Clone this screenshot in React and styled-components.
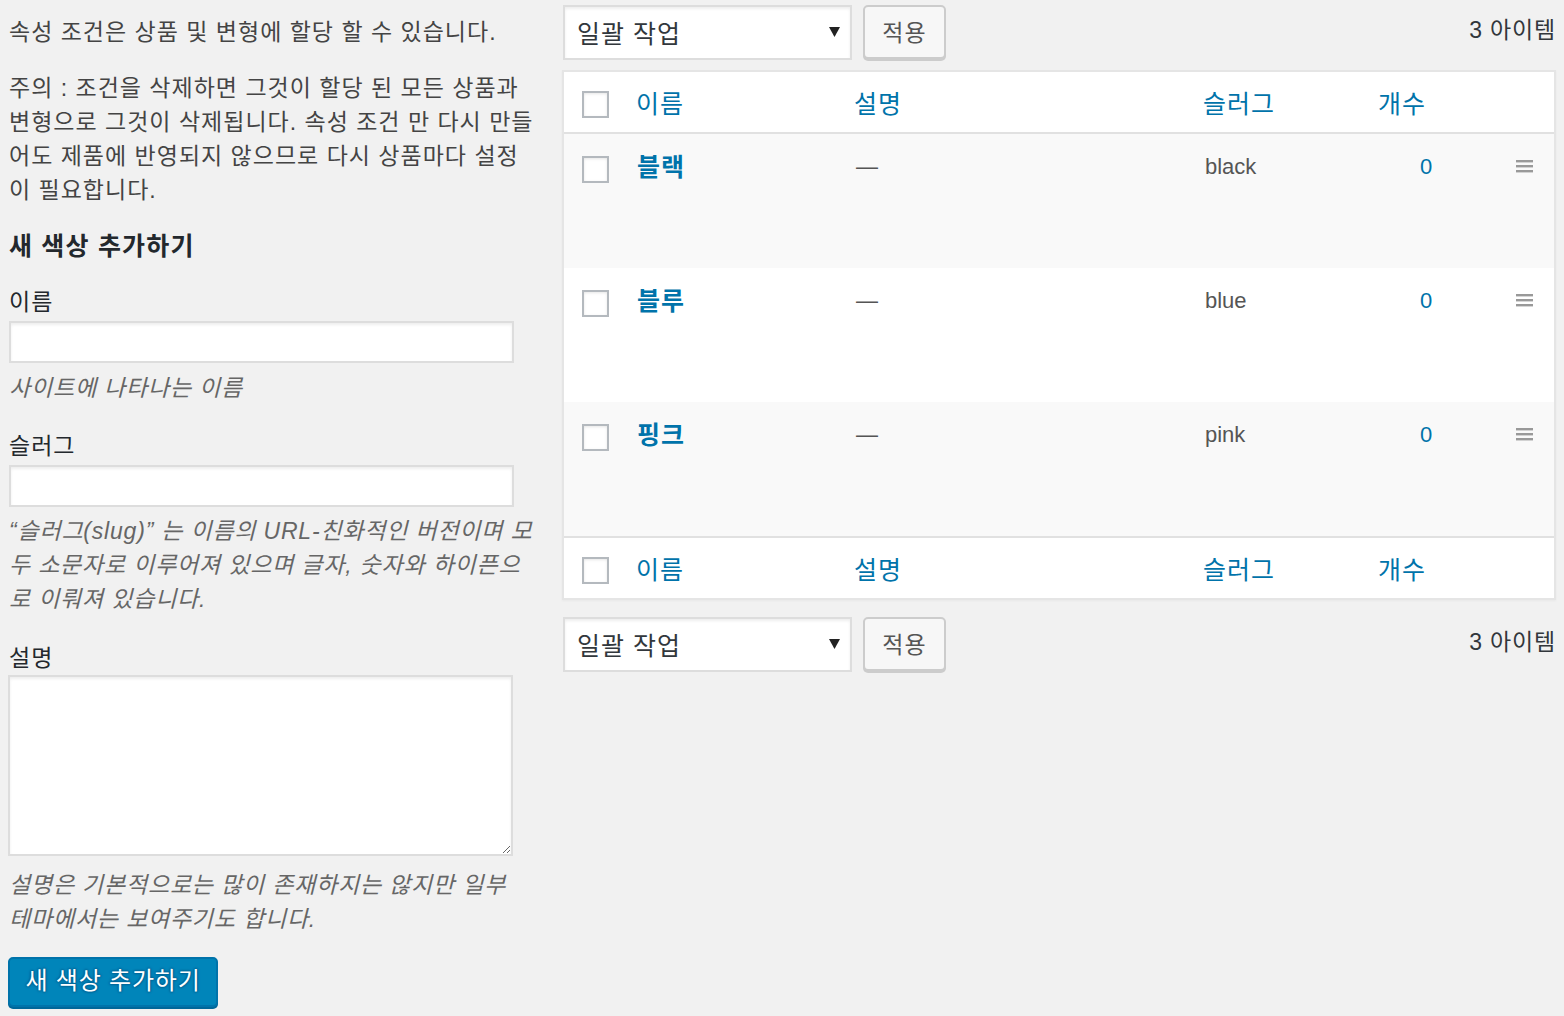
import styled, { createGlobalStyle } from "styled-components";

const GlobalStyle = createGlobalStyle`
  html, body {
    margin: 0;
    background: #f1f1f1;
  }
  body {
    font-family: "Liberation Sans", "Noto Sans CJK KR", sans-serif;
    color: #444;
    font-size: 23px;
    letter-spacing: 1px;
  }
  * {
    box-sizing: border-box;
  }
`;

const terms = [
  { name: "블랙", slug: "black", count: 0 },
  { name: "블루", slug: "blue", count: 0 },
  { name: "핑크", slug: "pink", count: 0 },
];

const Lines = ({ lines }) =>
  lines.map((l, i) => (
    <span key={i}>
      {l}
      {i < lines.length - 1 && <br />}
    </span>
  ));

const BulkActions = ({ bottom }) => (
  <TableNav $bottom={bottom}>
    <BulkSelect>
      <span>일괄 작업</span>
      <svg width="11" height="10" viewBox="0 0 11 10">
        <path d="M0 0 H11 L5.5 10 Z" fill="#222" />
      </svg>
    </BulkSelect>
    <ApplyButton>적용</ApplyButton>
    <ItemCount>3 아이템</ItemCount>
  </TableNav>
);

const HeaderRow = ({ foot }) => (
  <HeadRow $foot={foot}>
    <CheckCell $head>
      <Check type="checkbox" />
    </CheckCell>
    <HeadCell>이름</HeadCell>
    <HeadCell>설명</HeadCell>
    <HeadCell>슬러그</HeadCell>
    <HeadCell>개수</HeadCell>
    <div />
  </HeadRow>
);

const App = () => {
  return (
    <>
      <GlobalStyle />
      <Wrap>
        <LeftCol>
          <Para $top={15}>속성 조건은 상품 및 변형에 할당 할 수 있습니다.</Para>
          <Para $top={22}>
            <Lines
              lines={[
                "주의 : 조건을 삭제하면 그것이 할당 된 모든 상품과",
                "변형으로 그것이 삭제됩니다. 속성 조건 만 다시 만들",
                "어도 제품에 반영되지 않으므로 다시 상품마다 설정",
                "이 필요합니다.",
              ]}
            />
          </Para>
          <Heading>새 색상 추가하기</Heading>

          <Label $top={22}>이름</Label>
          <TextInput type="text" />
          <Help $top={8}>사이트에 나타나는 이름</Help>

          <Label $top={24}>슬러그</Label>
          <TextInput type="text" />
          <Help $top={7}>
            <Lines
              lines={[
                "“슬러그(slug)” 는 이름의 URL-친화적인 버전이며 모",
                "두 소문자로 이루어져 있으며 글자, 숫자와 하이픈으",
                "로 이뤄져 있습니다.",
              ]}
            />
          </Help>

          <Label $top={25}>설명</Label>
          <TextArea />
          <Help $top={12}>
            <Lines
              lines={[
                "설명은 기본적으로는 많이 존재하지는 않지만 일부",
                "테마에서는 보여주기도 합니다.",
              ]}
            />
          </Help>

          <PrimaryButton>새 색상 추가하기</PrimaryButton>
        </LeftCol>

        <RightCol>
          <BulkActions />

          <Table>
            <HeaderRow />
            {terms.map((t, i) => (
              <Row key={t.slug} $alt={i % 2 === 0}>
                <CheckCell>
                  <Check type="checkbox" />
                </CheckCell>
                <NameCell>{t.name}</NameCell>
                <Cell>—</Cell>
                <Cell>{t.slug}</Cell>
                <CountCell>{t.count}</CountCell>
                <HandleCell>
                  <svg width="17" height="13" viewBox="0 0 17 13">
                    <rect x="0" y="0" width="17" height="2.4" fill="#999" />
                    <rect x="0" y="5" width="17" height="2.4" fill="#999" />
                    <rect x="0" y="10" width="17" height="2.4" fill="#999" />
                  </svg>
                </HandleCell>
              </Row>
            ))}
            <HeaderRow foot />
          </Table>

          <BulkActions bottom />
        </RightCol>
      </Wrap>
    </>
  );
};

export default App;

const Wrap = styled.div`
  display: flex;
  align-items: flex-start;
  gap: 22px;
  padding: 0 8px 0 8px;
  min-height: 1016px;
`;

const LeftCol = styled.div`
  width: 532px;
  flex: none;
  display: flex;
  flex-direction: column;
  padding-left: 1px;
`;

const Para = styled.p`
  margin: ${(p) => p.$top}px 0 0;
  font-size: 23px;
  line-height: 34px;
  color: #444;
  white-space: nowrap;
`;

const Heading = styled.h2`
  margin: 22px 0 0;
  font-size: 25px;
  line-height: 34px;
  letter-spacing: 1.2px;
  font-weight: 700;
  color: #23282d;
`;

const Label = styled.label`
  margin-top: ${(p) => p.$top}px;
  font-size: 23px;
  line-height: 34px;
  color: #23282d;
`;

const TextInput = styled.input`
  margin-top: 2px;
  width: 505px;
  height: 42px;
  background: #fff;
  border: 2px solid #ddd;
  box-shadow: inset 0 2px 3px rgba(0, 0, 0, 0.07);
  font: inherit;
  outline: none;
`;

const Help = styled.p`
  margin: ${(p) => p.$top}px 0 0;
  font-size: 23px;
  line-height: 34px;
  letter-spacing: 0.8px;
  font-style: italic;
  color: #666;
  white-space: nowrap;
`;

const TextArea = styled.textarea`
  margin: 0 0 0 -1px;
  width: 505px;
  height: 181px;
  background: #fff;
  border: 2px solid #ddd;
  box-shadow: inset 0 2px 3px rgba(0, 0, 0, 0.07);
  resize: vertical;
  font: inherit;
  outline: none;
`;

const PrimaryButton = styled.button`
  margin: 21px 0 0 -1px;
  align-self: flex-start;
  width: 210px;
  height: 50px;
  padding: 0 0 3px;
  background: #0085ba;
  border: 2px solid #0073aa;
  border-radius: 5px;
  box-shadow: 0 2px 0 #006799;
  color: #fff;
  font-family: inherit;
  font-size: 24px;
  letter-spacing: 0.8px;
  line-height: 1;
  text-shadow: 0 -1px 2px #006799, 1px 0 2px #006799, 0 1px 2px #006799,
    -1px 0 2px #006799;
`;

const RightCol = styled.div`
  flex: 1;
  display: flex;
  flex-direction: column;
  padding-top: 5px;
`;

const TableNav = styled.div`
  display: flex;
  align-items: flex-start;
  height: 57px;
  margin: ${(p) => (p.$bottom ? "17px 0 0" : "0 0 8px")};
`;

const BulkSelect = styled.div`
  display: flex;
  align-items: center;
  justify-content: space-between;
  width: 289px;
  height: 55px;
  margin-left: 1px;
  padding: 0 10px 0 12px;
  background: #fff;
  border: 2px solid #ddd;
  box-shadow: inset 0 2px 3px rgba(0, 0, 0, 0.07);
  font-size: 25px;
  color: #32373c;

  span {
    line-height: 1;
    margin-top: 4px;
  }
  svg {
    display: block;
    margin-top: -2px;
  }
`;

const ApplyButton = styled.button`
  margin-left: 11px;
  width: 83px;
  height: 54px;
  padding: 2px 0 0;
  background: #f7f7f7;
  border: 2px solid #ccc;
  border-radius: 5px;
  box-shadow: 0 2px 0 #ccc;
  color: #555;
  font-family: inherit;
  font-size: 23px;
  letter-spacing: 1px;
  line-height: 1;
`;

const ItemCount = styled.div`
  margin-left: auto;
  font-size: 23px;
  line-height: 50px;
  letter-spacing: 0.8px;
  color: #32373c;
`;

const Table = styled.div`
  background: #fff;
  border: 2px solid #e5e5e5;
  box-shadow: 0 1px 2px rgba(0, 0, 0, 0.04);
`;

const gridCols = "56px 218px 349px 175px 128px 1fr";

const HeadRow = styled.div`
  display: grid;
  grid-template-columns: ${gridCols};
  height: 62px;
  background: #fff;
  ${(p) =>
    p.$foot
      ? "border-top: 2px solid #e1e1e1;"
      : "border-bottom: 2px solid #e1e1e1;"}
`;

const Row = styled.div`
  display: grid;
  grid-template-columns: ${gridCols};
  height: 134px;
  background: ${(p) => (p.$alt ? "#f9f9f9" : "#fff")};
`;

const CheckCell = styled.div`
  padding: ${(p) => (p.$head ? "19px 0 0 18px" : "22px 0 0 18px")};
`;

const Check = styled.input`
  appearance: none;
  display: block;
  margin: 0;
  width: 27px;
  height: 27px;
  background: #fff;
  border: 2px solid #b4b9be;
  box-shadow: inset 0 1px 3px rgba(0, 0, 0, 0.1);
`;

const HeadCell = styled.div`
  padding: 15px 0 0 16px;
  font-size: 25px;
  line-height: 34px;
  color: #0073aa;
`;

const Cell = styled.div`
  padding: 16px 0 0 18px;
  font-size: 22px;
  letter-spacing: 0;
  line-height: 34px;
  color: #555;
`;

const NameCell = styled(Cell)`
  padding-left: 17px;
  font-size: 25px;
  letter-spacing: 1px;
  font-weight: 700;
  color: #0073aa;
`;

const CountCell = styled(Cell)`
  padding-left: 0;
  text-align: center;
  color: #0073aa;
`;

const HandleCell = styled.div`
  padding: 26px 0 0 26px;

  svg {
    display: block;
  }
`;
